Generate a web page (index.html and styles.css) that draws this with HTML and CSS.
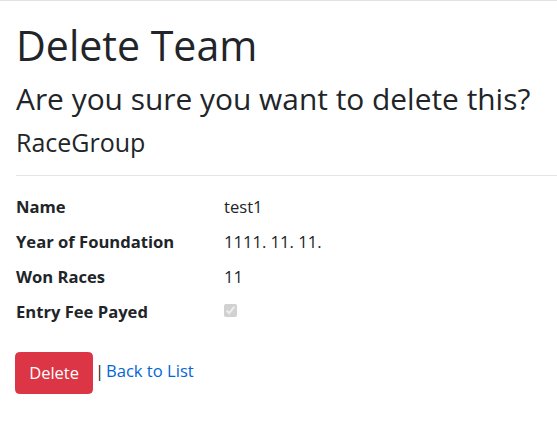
FILE: index.html
```html
<!DOCTYPE html>
<html lang="en">
<head>
<meta charset="utf-8">
<title>Delete Team</title>
<link rel="stylesheet" href="styles.css">
</head>
<body>
<header class="topbar"></header>
<main class="container">
  <h1 class="title">Delete Team</h1>
  <h2 class="question">Are you sure you want to delete this?</h2>
  <div class="group">
    <h4 class="group-name">RaceGroup</h4>
    <hr class="divider">
    <dl class="details">
      <dt>Name</dt>
      <dd>test1</dd>
      <dt>Year of Foundation</dt>
      <dd>1111. 11. 11.</dd>
      <dt>Won Races</dt>
      <dd>11</dd>
      <dt>Entry Fee Payed</dt>
      <dd><input class="check-box" type="checkbox" checked disabled></dd>
    </dl>
    <form class="actions">
      <button type="button" class="btn-danger">Delete</button> | <a href="#" class="back">Back to List</a>
    </form>
  </div>
</main>
</body>
</html>
```
FILE: styles.css
```css
html, body {
  margin: 0;
  padding: 0;
  background: #fff;
}
body {
  font-family: "Open Sans", "Noto Sans", sans-serif;
  font-size: 16.6px;
  line-height: 26.4px;
  color: #212529;
}
.topbar {
  height: 0;
  border-bottom: 1px solid #dee2e6;
  box-shadow: 0 4px 13px rgba(0, 0, 0, 0.05);
}
.container {
  padding: 18.25px 0 0 16px;
}
.title {
  margin: 0 0 6.85px 0;
  font-size: 41.1px;
  line-height: 53px;
  font-weight: 500;
}
.question {
  margin: 0 0 7.9px 0;
  font-size: 29.9px;
  line-height: 40px;
  font-weight: 500;
}
.group-name {
  margin: 0;
  font-size: 25px;
  line-height: 30px;
  font-weight: 500;
}
.divider {
  margin: 18px 0 17.9px 0;
  border: 0;
  border-top: 1px solid rgba(0, 0, 0, 0.1);
  height: 0;
}
.details {
  display: grid;
  grid-template-columns: 208px 1fr;
  margin: 0 0 17.3px 0;
}
.details dt {
  font-weight: 700;
  margin: 0 0 8.8px 0;
}
.details dd {
  margin: 0 0 8.8px 0;
}
.check-box {
  margin: 0;
  width: 13px;
  height: 13px;
  vertical-align: 1px;
}
.actions {
  margin: 0;
  word-spacing: -2.5px;
}
.btn-danger {
  display: inline-block;
  vertical-align: middle;
  margin-left: -1px;
  font-family: inherit;
  font-size: 16.5px;
  line-height: 26.4px;
  word-spacing: normal;
  padding: 6.6px 13.2px;
  border: 1.1px solid #dc3545;
  background: #dc3545;
  color: #fff;
  border-radius: 4.4px;
}
.back {
  color: #0366d6;
  text-decoration: none;
  word-spacing: normal;
}
```
